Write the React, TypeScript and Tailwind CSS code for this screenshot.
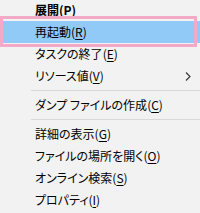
const items: { label: string; key: string; bold?: boolean; active?: boolean; sub?: boolean }[] = [
  { label: "展開", key: "P", bold: true },
  { label: "再起動", key: "R", active: true },
  { label: "タスクの終了", key: "E" },
  { label: "リソース値", key: "V", sub: true },
];

const groups = [
  items,
  [{ label: "ダンプ ファイルの作成", key: "C" }],
  [
    { label: "詳細の表示", key: "G" },
    { label: "ファイルの場所を開く", key: "O" },
    { label: "オンライン検索", key: "S" },
    { label: "プロパティ", key: "I" },
  ],
];

function Row({ label, keyChar, bold, active, sub }: { label: string; keyChar: string; bold?: boolean; active?: boolean; sub?: boolean }) {
  return (
    <div
      className={`relative flex h-[22px] items-center pl-[35px] ${active ? "bg-[#91c9f7]" : ""}`}
    >
      <span className={bold ? "font-bold" : ""}>
        {label}(<span className={bold ? "" : "underline underline-offset-2"}>{keyChar}</span>)
      </span>
      {sub && (
        <svg className="absolute left-[185px] top-[7px]" width="6" height="9" viewBox="0 0 6 9">
          <path d="M1 0.5 L5 4.5 L1 8.5" fill="none" stroke="#333" strokeWidth="1.1" />
        </svg>
      )}
    </div>
  );
}

export default function App() {
  return (
    <div
      className="relative h-[213px] w-[200px] overflow-hidden bg-[#f2f2f2] text-[12px] leading-none text-black [font-feature-settings:'palt']"
      style={{ fontFamily: '"Noto Sans CJK JP", "Noto Sans", sans-serif' }}
    >
      <div className="mt-[-1px] flex flex-col">
        {groups.map((g, gi) => (
          <div key={gi} className="flex flex-col">
            {gi > 0 && (
              <div className="flex h-[7px] items-center pl-[31px]">
                <div className="h-px w-full bg-[#d9d9d9]" />
              </div>
            )}
            {g.map((it: any) => (
              <Row key={it.label} label={it.label} keyChar={it.key} bold={it.bold} active={it.active} sub={it.sub} />
            ))}
          </div>
        ))}
      </div>
      <div className="absolute left-0 top-[16px] h-[31px] w-[197px] border-[3px] border-[#f4a9c6]" />
    </div>
  );
}
